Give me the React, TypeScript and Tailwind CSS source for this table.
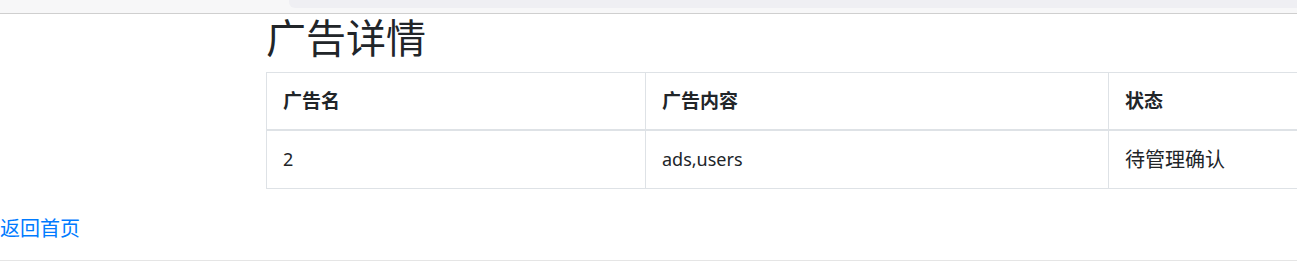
import React from "react";

const font = {
  fontFamily: '"Noto Sans", "Noto Sans CJK SC", sans-serif',
};

export default function App() {
  return (
    <div className="w-[1297px] h-[265px] overflow-hidden bg-white text-[#212529]" style={font}>
      {/* browser-ish top strip */}
      <div className="h-[14px] bg-[#f7f7f8] border-b border-[#cfcfcf] flex">
        <div className="ml-[289px] flex-1 h-[8px] bg-[#efeff3] rounded-bl-[6px]" />
      </div>

      <div className="pl-[266px]">
        <h1 className="text-[40px] leading-[48px] font-normal mb-[10px]">广告详情</h1>
        <table className="table-fixed border-collapse w-[1140px] text-[19px]">
          <colgroup>
            <col className="w-[379px]" />
            <col className="w-[463px]" />
            <col />
          </colgroup>
          <thead>
            <tr>
              <th className="border border-[#dee2e6] border-b-2 px-4 py-4 leading-6 text-left font-bold">广告名</th>
              <th className="border border-[#dee2e6] border-b-2 px-4 py-4 leading-6 text-left font-bold">广告内容</th>
              <th className="border border-[#dee2e6] border-b-2 px-4 py-4 leading-6 text-left font-bold">状态</th>
            </tr>
          </thead>
          <tbody>
            <tr>
              <td className="border border-[#dee2e6] px-4 py-4 leading-[25px] text-[18px]">2</td>
              <td className="border border-[#dee2e6] px-4 py-4 leading-[25px] text-[18px]">ads,users</td>
              <td className="border border-[#dee2e6] px-4 py-4 leading-[25px] text-[20px]">待管理确认</td>
            </tr>
          </tbody>
        </table>
      </div>

      <div className="mt-[25px]">
        <a href="#" className="text-[#007bff] text-[20px] leading-[30px]">返回首页</a>
      </div>
      <hr className="mt-[16px] border-t border-[#e5e5e5]" />
    </div>
  );
}
